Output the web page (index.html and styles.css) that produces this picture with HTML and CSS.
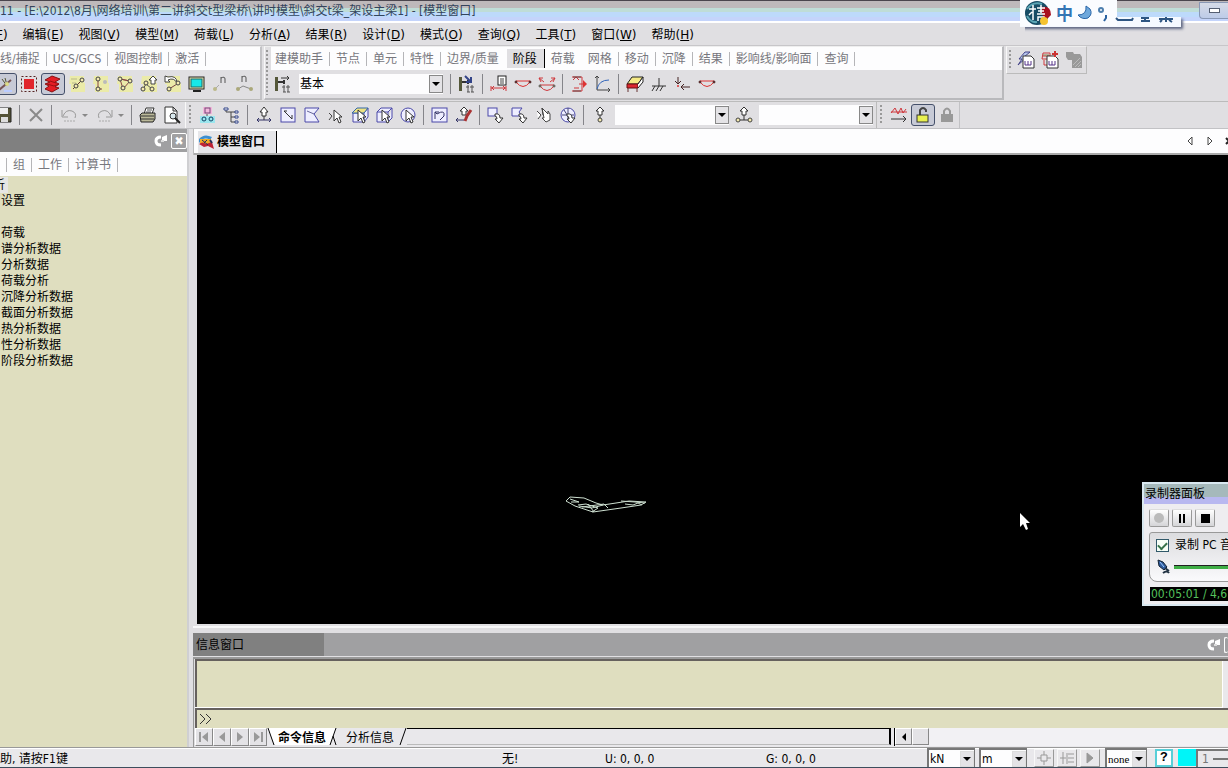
FILE: index.html
```html
<!DOCTYPE html>
<html lang="zh-CN">
<head>
<meta charset="utf-8">
<title>模型窗口</title>
<link rel="stylesheet" href="styles.css">
</head>
<body>
<header class="titlebar">
  <h1 class="title">11 - [E:\2012\8月\网络培训\第二讲斜交t型梁桥\讲时模型\斜交t梁_架设主梁1] - [模型窗口]</h1>
  <button class="minimize" aria-label="最小化"><span class="min-glyph"></span></button>
  <div class="ime">
    <div class="ime-top">
      <svg width="28" height="26" viewBox="0 0 28 26"><circle cx="13" cy="13" r="12" fill="#174c65"/><path d="M3 9Q9 1 18 4M3 16q4 7 10 6" stroke="#5ba5b5" stroke-width="2" fill="none"/><path d="M17 7q10-2 10 8l-7 7z" fill="#a80f20"/><path d="M5 9h7M9 5v15M8 12l-3 3M13 8h8M14 11h6M13 14h8M17 5v8M14 21v-4h6v4" stroke="#fff" stroke-width="1.500" fill="none"/><circle cx="20" cy="21" r="4" fill="#f5c331"/></svg>
      <span class="ime-cn">中</span>
      <svg width="16" height="18" viewBox="0 0 16 18"><path d="M9 2q1 9-8 9q4 5 10 3q5-4 2-9z" fill="#6ea8dc" stroke="#2a66a8"/></svg>
      <svg width="12" height="18" viewBox="0 0 12 18"><circle cx="4" cy="6" r="2" fill="none" stroke="#4d7fae" stroke-width="2"/><path d="M9 11v3l-2 3" stroke="#2a62a0" stroke-width="2" fill="none"/></svg>
    </div>
    <svg class="ime-rest" width="62" height="10" viewBox="0 0 62 10"><path d="M1 1l2 2h14l1-2M26 1h8M30 1v4M26 4h9M44 2h14M51 0v5M47 3l-2 2M54 3l3 2" stroke="#2d5582" stroke-width="2" fill="none"/></svg>
  </div>
</header>
<nav class="menubar">
  <button class="menu cut"><u>F</u>)</button><button class="menu">编辑(<u>E</u>)</button><button class="menu">视图(<u>V</u>)</button><button class="menu">模型(<u>M</u>)</button><button class="menu">荷载(<u>L</u>)</button><button class="menu">分析(<u>A</u>)</button><button class="menu">结果(<u>R</u>)</button><button class="menu">设计(<u>D</u>)</button><button class="menu">模式(<u>O</u>)</button><button class="menu">查询(<u>Q</u>)</button><button class="menu">工具(<u>T</u>)</button><button class="menu">窗口(<u>W</u>)</button><button class="menu">帮助(<u>H</u>)</button>
</nav>
<section class="dock dock-top">
  <div class="group view-group">
    <div class="tabs"><button class="tab first">线/捕捉</button><button class="tab">UCS/GCS</button><button class="tab">视图控制</button><button class="tab">激活</button></div>
    <div class="tools cropped">
      <button class="tool on" aria-label="捕捉"><svg viewBox="0 0 18 18"><path d="M3 15L15 5" stroke="#755" stroke-width="2"/><path d="M6 4l5 7M9 3l2 7" stroke="#553" fill="none"/><circle cx="11" cy="9" r="2" fill="#dd8"/><path d="M8 16h8" stroke="#bcf" stroke-width="2"/></svg></button>
      <button class="tool" aria-label="窗选"><svg viewBox="0 0 18 18"><rect x="1.500" y="1.500" width="15" height="15" fill="none" stroke="#522" stroke-dasharray="2 2"/><rect x="4" y="4" width="10" height="10" fill="#e1262c"/></svg></button>
      <button class="tool on" aria-label="钢束"><svg viewBox="0 0 18 18"><path d="M1 5l7-4 8 3-5 3 4 2-4 3 4 1-7 4-7-3 4-3-4-2 5-2z" fill="#e51e25" stroke="#811"/><path d="M3 9l7 2 5-2M6 6l6 2" stroke="#911" fill="none"/></svg></button>
      <button class="tool" aria-label="激活节点"><svg viewBox="0 0 18 18"><use href="#glow"/><path d="M5 14L14 5" stroke="#633"/><path d="M3 4h6M4 8h4" stroke="#b9b98a"/><circle cx="14" cy="5" r="2" class="nd"/><circle cx="8" cy="11" r="2" class="nd"/></svg></button>
      <button class="tool" aria-label="激活单元"><svg viewBox="0 0 18 18"><use href="#glow"/><path d="M6 4v10h4" stroke="#844" fill="none"/><circle cx="6" cy="4" r="2" class="nd"/><circle cx="6" cy="14" r="2" class="nd"/><circle cx="13" cy="7" r="2" fill="#bbb"/></svg></button>
      <button class="tool" aria-label="激活平面"><svg viewBox="0 0 18 18"><use href="#glow"/><path d="M4 4l3 10 7-8zM4 4l10 2" stroke="#844" fill="none"/><circle cx="4" cy="4" r="2" class="nd"/><circle cx="7" cy="13" r="2" class="nd"/><circle cx="14" cy="6" r="2" class="nd"/></svg></button>
      <button class="tool" aria-label="选择"><svg viewBox="0 0 18 18"><use href="#glow"/><path d="M9 5l4-4 4 4h-2v4h-4V5z" fill="#fff" stroke="#444"/><path d="M3 14L6 9l6 5" stroke="#555" fill="none"/><circle cx="3" cy="14" r="2" class="nd"/><circle cx="12" cy="14" r="2" class="nd"/><circle cx="6" cy="8" r="2" class="nd"/></svg></button>
      <button class="tool" aria-label="恢复"><svg viewBox="0 0 18 18"><use href="#glow"/><path d="M1 1v6h5L4 5q6-3 9 3 0-8-9-6z" fill="#fff" stroke="#444"/><path d="M5 14l8-5" stroke="#744"/><circle cx="5" cy="14" r="2" class="nd"/><circle cx="14" cy="8" r="2" class="nd"/></svg></button>
      <button class="tool" aria-label="显示"><svg viewBox="0 0 18 18"><rect x="1" y="2" width="15" height="12" fill="#e9e9b0" stroke="#222"/><rect x="3" y="4" width="11" height="8" fill="#18e8e8" stroke="#266"/><path d="M5 16h8" stroke="#222" stroke-width="2"/></svg></button>
      <button class="tool" aria-label="节点号"><svg viewBox="0 0 18 18"><path d="M9 8V2M9 3q4-2 4 1v4" stroke="#555" fill="none"/><circle cx="3" cy="14" r="2" fill="#bbb98a"/><path d="M4 13l3-3" stroke="#aaa"/></svg></button>
      <button class="tool" aria-label="单元号"><svg viewBox="0 0 18 18"><path d="M6 7V1M6 2q4-2 4 1v4" stroke="#555" fill="none"/><path d="M2 14L7 11l8 3" stroke="#888" fill="none"/><circle cx="2" cy="14" r="2" fill="#aaa87a"/><circle cx="15" cy="14" r="2" fill="#aaa87a"/></svg></button>
    </div>
  </div>
  <div class="group model-group">
    <span class="grip"></span>
    <div class="group-body">
      <div class="tabs"><button class="tab">建模助手</button><button class="tab">节点</button><button class="tab">单元</button><button class="tab">特性</button><button class="tab plain">边界/质量</button><button class="tab active">阶段</button><button class="tab plain">荷载</button><button class="tab">网格</button><button class="tab">移动</button><button class="tab">沉降</button><button class="tab">结果</button><button class="tab">影响线/影响面</button><button class="tab">查询</button></div>
      <div class="tools">
        <button class="tool" aria-label="定义阶段"><svg viewBox="0 0 18 18"><use href="#stage"/><path d="M7 3h8m-2-2l2 2-2 2" stroke="#333" fill="none"/></svg></button>
        <span class="combo stage-combo"><select aria-label="施工阶段"><option>基本</option></select><i class="arrow"></i></span>
        <i class="sep"></i>
        <button class="tool" aria-label="阶段"><svg viewBox="0 0 18 18"><use href="#stage"/><path d="M7 1l6 6M13 2v5H8" stroke="#348" stroke-width="2" fill="none"/></svg></button>
        <i class="sep"></i>
        <button class="tool" aria-label="钢束特性"><svg viewBox="0 0 18 18"><rect x="8" y="1" width="8" height="9" fill="#fff" stroke="#222"/><path d="M10 4h4M10 6h4M10 8h4" stroke="#444"/><path d="M1 13h15M1 11v5M16 11v5M4 11l-2 2 2 2M13 11l2 2-2 2" class="red"/></svg></button>
        <button class="tool" aria-label="钢束形状"><svg viewBox="0 0 18 18"><use href="#tendon"/></svg></button>
        <button class="tool" aria-label="钢束预应力"><svg viewBox="0 0 18 18"><path d="M3 7l-2-4h4M1 3l5 4M15 7l2-4h-4M17 3l-5 4M2 10h14M2 11q7 9 14 0" class="red"/><circle cx="2" cy="11" r="1" class="nd"/><circle cx="16" cy="11" r="1" class="nd"/></svg></button>
        <i class="sep"></i>
        <button class="tool" aria-label="荷载"><svg viewBox="0 0 18 18"><path d="M2 2h10v14H2M3 5l3-3 3 3M4 13h5M9 9h5" class="red"/><path d="M13 5l4 4-4 4z" fill="#d33"/><path d="M3 2h8M3 16h8" stroke="#644"/></svg></button>
        <button class="tool" aria-label="曲线"><svg viewBox="0 0 18 18"><path d="M3 1v14h13M1 3l2-2 2 2M14 13l2 2-2 2" stroke="#444" fill="none"/><path d="M3 14Q5 5 15 5" stroke="#36b" fill="none"/></svg></button>
        <i class="sep"></i>
        <button class="tool" aria-label="截面"><svg viewBox="0 0 18 18"><path d="M1 9L6 2h11l-5 7z" fill="#f5ea86" stroke="#222"/><path d="M1 9h11v4H1z" fill="#dc2730" stroke="#611"/><path d="M12 9l5-7v5l-5 6" fill="#fff" stroke="#222"/><path d="M2 13v4M11 13v4" stroke="#633"/></svg></button>
        <button class="tool" aria-label="边界"><svg viewBox="0 0 18 18"><path d="M9 3v8M2 11h14M5 11l-3 5M9 11l-3 5M13 11l-3 5" stroke="#333" fill="none"/></svg></button>
        <button class="tool" aria-label="作用"><svg viewBox="0 0 18 18"><path d="M4 2v7M1 6l3 3 3-3" stroke="#422" fill="none"/><circle cx="4" cy="11" r="1" fill="#d33"/><path d="M7 12h9M10 9l-3 3 3 3" stroke="#422" fill="none"/></svg></button>
        <button class="tool" aria-label="钢束"><svg viewBox="0 0 18 18"><use href="#tendon"/></svg></button>
      </div>
    </div>
  </div>
  <div class="group word-group">
    <span class="grip"></span>
    <button class="tool" aria-label="生成报告"><svg viewBox="0 0 18 18"><path d="M8 1L2 8h3l-4 6 9-8H7l6-5z" fill="#b8c8f0" stroke="#448"/><use href="#word"/></svg></button>
    <button class="tool" aria-label="添加报告"><svg viewBox="0 0 18 18"><path d="M2 2h7v6H1zM2 5h7M3 9v5h3" class="red"/><path d="M2 4h6" stroke="#885"/><use href="#word"/><path d="M14 0v6M11 3h6" stroke="#c33" stroke-width="2"/></svg></button>
    <button class="tool" aria-label="报告"><svg viewBox="0 0 18 18"><path d="M1 1h7l1 2h6l2 3v11H7V9H3L1 6z" fill="#999"/><path d="M8 14l7-7M10 16l6-6M13 16l3-3" stroke="#bbb"/></svg></button>
  </div>
</section>
<section class="dock dock-low">
  <div class="tools save-tools">
    <button class="tool" aria-label="保存"><svg viewBox="0 0 18 18"><path d="M2 2h14v14H2z" fill="#555337" stroke="#222"/><path d="M5 2h8v6H5z" fill="#eee"/><path d="M6 11h7v5H6z" fill="#ddd"/></svg></button><i class="sep"></i>
    <button class="tool" aria-label="删除"><svg viewBox="0 0 18 18"><path d="M3 3l12 12M15 3L3 15" stroke="#8a8a8a" stroke-width="2"/></svg></button><i class="sep"></i>
    <button class="tool undo" aria-label="撤销"><svg viewBox="0 0 18 18"><use href="#undo"/></svg><i class="drop"></i></button>
    <button class="tool undo" aria-label="重做"><svg viewBox="0 0 18 18"><use href="#undo" transform="matrix(-1 0 0 1 18 0)"/></svg><i class="drop"></i></button><i class="sep"></i>
    <button class="tool" aria-label="打印"><svg viewBox="0 0 18 18"><path d="M5 8l2-6h8l-2 6" fill="#fff" stroke="#333"/><path d="M8 4h5M7 6h5" stroke="#555"/><path d="M1 9l2-2h13v6l-2 3H2z" fill="#bbb99a" stroke="#222"/><path d="M2 10h13M2 13h13" stroke="#333"/></svg></button>
    <button class="tool" aria-label="打印预览"><svg viewBox="0 0 18 18"><path d="M2 1h8l4 4v12H2zM10 1v4h4" fill="#fff" stroke="#333"/><circle cx="10" cy="10" r="3" fill="#d9e8ee" stroke="#333"/><path d="M12 12l5 5" stroke="#222" stroke-width="2"/></svg></button>
  </div>
  <div class="tools select-tools">
    <span class="grip"></span>
    <button class="tool" aria-label="组"><svg viewBox="0 0 18 18"><path d="M4 1h9v7H4z" fill="#f3b8dc"/><path d="M1 10h15v7H1z" fill="#9be6ee"/><rect x="6" y="2" width="5" height="5" fill="none" stroke="#747"/><circle cx="5" cy="13" r="2" fill="none" stroke="#146"/><circle cx="12" cy="13" r="2" fill="none" stroke="#146"/><path d="M8 8v2" stroke="#555"/></svg></button>
    <button class="tool" aria-label="树"><svg viewBox="0 0 18 18"><path d="M3 3v3h5v10h4M8 6h4M8 11h4" stroke="#444" fill="none"/><path d="M1 2h4v2H1zM12 5h3v2h-3zM12 10h3v2h-3zM12 15h3v2h-3z" fill="#fff" stroke="#348"/></svg></button><i class="sep"></i>
    <button class="tool" aria-label="单选"><svg viewBox="0 0 18 18"><path d="M9 1l4 5h-2v4H7V6H5zM9 10v4" fill="#fff" stroke="#333"/><path d="M2 14h14M4 12l-2 2 2 2M14 12l2 2-2 2" stroke="#336" fill="none"/></svg></button>
    <button class="tool" aria-label="窗口选择"><svg viewBox="0 0 18 18"><rect x="2" y="2" width="14" height="14" class="blue"/><path d="M5 5l8 8M5 5h3M13 13v-4" stroke="#333" fill="none"/></svg></button>
    <button class="tool" aria-label="多边形选择"><svg viewBox="0 0 18 18"><path d="M2 2h14l-5 6 5 8H2z" class="blue"/><path d="M4 5l7 3" stroke="#669"/></svg></button>
    <button class="tool" aria-label="交叉选择"><svg viewBox="0 0 18 18"><path d="M2 7l3 3-3 4" stroke="#444" fill="none"/><use href="#pointer"/></svg></button>
    <button class="tool" aria-label="平面选择"><svg viewBox="0 0 18 18"><path d="M2 7h11v9H2zM13 7l4-5v9l-4 5" class="blue"/><path d="M1 7l5-5h11l-4 5z" fill="#eee383" stroke="#36a"/><use href="#pointer"/></svg></button>
    <button class="tool" aria-label="体选择"><svg viewBox="0 0 18 18"><path d="M2 6h11v10H2zM2 6l4-4h11l-4 4M17 2v10l-4 4" class="blue"/><use href="#pointer"/></svg></button>
    <button class="tool" aria-label="全选"><svg viewBox="0 0 18 18"><circle cx="9" cy="9" r="7" class="blue"/><use href="#pointer"/></svg></button><i class="sep"></i>
    <button class="tool" aria-label="前次选择"><svg viewBox="0 0 18 18"><rect x="1" y="2" width="15" height="14" class="blue"/><path d="M4 13V6l2 2q8-5 7 2l-4 4M4 6h4" stroke="#336" fill="none"/></svg></button>
    <button class="tool" aria-label="最新选择"><svg viewBox="0 0 18 18"><path d="M5 5l4-4 4 4h-2v4H7V5z" fill="#fff" stroke="#333"/><path d="M1 14h8M3 12l-2 2 2 2" stroke="#336" fill="none"/><path d="M10 15l2-5 4-6" stroke="#a33" stroke-width="3"/></svg></button><i class="sep"></i>
    <button class="tool" aria-label="窗口解除"><svg viewBox="0 0 18 18"><rect x="1" y="2" width="9" height="8" class="blue"/><use href="#down"/></svg></button>
    <button class="tool" aria-label="多边形解除"><svg viewBox="0 0 18 18"><path d="M1 2h10L8 6l3 4H1z" class="blue"/><use href="#down"/></svg></button>
    <button class="tool" aria-label="交叉解除"><svg viewBox="0 0 18 18"><path d="M2 5l4 4-3 4M7 2l6 6V5l2 3v6l-4 2-4-4h2zM7 2l1 7" fill="#fff" stroke="#444"/></svg></button>
    <button class="tool" aria-label="全部解除"><svg viewBox="0 0 18 18"><circle cx="9" cy="9" r="7" class="blue"/><path d="M3 9h12M5 4l7 11M9 2v12" stroke="#447" fill="none"/><use href="#down"/></svg></button><i class="sep"></i>
    <button class="tool" aria-label="选择节点"><svg viewBox="0 0 18 18"><path d="M9 1l4 4h-2v4H7V5H5z" fill="#fff" stroke="#333"/><path d="M9 9v4" stroke="#333"/><circle cx="9" cy="14" r="2" class="nd"/></svg></button>
    <span class="combo pick"><select aria-label="节点"><option></option></select><i class="arrow"></i></span>
    <button class="tool" aria-label="选择单元"><svg viewBox="0 0 18 18"><path d="M9 1l4 4h-2v4H7V5H5z" fill="#fff" stroke="#333"/><path d="M3 14h12M9 9v5" stroke="#333"/><circle cx="3" cy="14" r="2" class="nd"/><circle cx="15" cy="14" r="2" class="nd"/></svg></button>
    <span class="combo pick"><select aria-label="单元"><option></option></select><i class="arrow"></i></span>
  </div>
  <div class="tools lock-tools">
    <span class="grip"></span>
    <button class="tool" aria-label="分析状态"><svg viewBox="0 0 18 18"><path d="M1 7l4-5 3 6 3-6 2 5 3-4M1 6h16" class="red"/><path d="M1 13h15M13 10l3 3-3 3" stroke="#333" fill="none"/></svg></button>
    <button class="tool on" aria-label="解锁"><svg viewBox="0 0 18 18"><path d="M6 9V4q3-4 6 0v2" stroke="#444" stroke-width="2" fill="none"/><rect x="3" y="9" width="11" height="7" fill="#e8f050" stroke="#333"/></svg></button>
    <button class="tool" aria-label="锁定"><svg viewBox="0 0 18 18"><path d="M6 8V5q3-5 6 0v4" stroke="#999" stroke-width="2" fill="none"/><rect x="3" y="8" width="12" height="8" fill="#999"/></svg></button>
  </div>
</section>
<main class="workspace">
  <aside class="sidebar">
    <div class="pane-head side-head"><span class="grow"></span><svg class="pin" viewBox="0 0 14 12"><use href="#pin"/></svg><button class="close" aria-label="关闭">✖</button></div>
    <div class="tabs side-tabs"><button class="tab">组</button><button class="tab">工作</button><button class="tab">计算书</button></div>
    <ul class="tree"><li><span class="selected">析</span></li><li>设置</li><li></li><li>荷载</li><li>谱分析数据</li><li>分析数据</li><li>荷载分析</li><li>沉降分析数据</li><li>截面分析数据</li><li>热分析数据</li><li>性分析数据</li><li>阶段分析数据</li></ul>
  </aside>
  <div class="content">
    <div class="doc-tabs">
      <button class="doc-tab"><svg width="17" height="16" viewBox="0 0 17 16"><path d="M1 5q5-6 13-2l-2 3Q6 2 1 9z" fill="#3c8fd0"/><path d="M2 5h11v5H2z" fill="#f0ad24"/><path d="M1 10q4-3 7 0l6-2 2 7-6-3-4 1z" fill="#be2335"/><path d="M4 6l6 5M9 6l-3 3" stroke="#24315d"/><path d="M12 6l2 3" stroke="#24315d" stroke-width="2"/></svg>模型窗口</button>
      <span class="grow"></span>
      <svg width="42" height="12" viewBox="0 0 42 12"><path d="M6 1v8L2 5zM22 1v8l4-4z" fill="#fff" stroke="#444"/><path d="M40 2l6 6M46 2l-6 6" stroke="#222" stroke-width="2"/></svg>
    </div>
    <div class="viewport">
      <svg class="model" width="84" height="20" viewBox="0 0 84 20"><path d="M1 5L5 1l14 1 12 5 7 2 26-4 17 1-5 3-20 3-28 4-18-6zM5 3l9 3-8 0M13 9l8-1 12 4-6 4M17 11l22-3 4 4M23 8l6 8M38 9l-11 3-13-2M56 5l14 1 10 1M60 8l8 1 5-2 4 2" fill="none" stroke="#cddfd0"/></svg>
      <svg class="cursor" width="12" height="19" viewBox="0 0 12 19"><path d="M1 1v14l3-3 3 6 2-1-2-6h4z" fill="#fff"/></svg>
      <section class="recorder">
        <h2 class="rec-title">录制器面板</h2>
        <div class="rec-buttons"><button class="rec-btn" aria-label="录制"><i class="dot"></i></button><button class="rec-btn" aria-label="暂停"><i class="pause"></i></button><button class="rec-btn" aria-label="停止"><i class="stop"></i></button></div>
        <div class="rec-box">
          <label class="rec-check"><input type="checkbox" checked>录制 PC 音</label>
          <div class="rec-level"><svg width="16" height="16" viewBox="0 0 16 16"><path d="M2 1l5 2 4 5-3 3-5-4z" fill="#2f5a9c" stroke="#123"/><path d="M9 9l4 3M7 14q4-3 6 0" stroke="#234" stroke-width="2" fill="none"/><path d="M4 3l4 5" stroke="#9cf"/></svg><span class="meter"></span></div>
        </div>
        <div class="rec-time">00:05:01 / 4,6</div>
      </section>
    </div>
    <section class="messages">
      <div class="pane-head msg-head"><h2 class="msg-title">信息窗口</h2><span class="grow"></span><svg class="pin" viewBox="0 0 14 12"><use href="#pin"/></svg><button class="close edge" aria-label="关闭"></button></div>
      <div class="msg-frame">
        <div class="msg-body"><span class="grow"></span><span class="vscroll"></span></div>
        <label class="prompt"><svg width="14" height="10" viewBox="0 0 14 10"><path d="M1 0l5 5-5 5M7 0l5 5-5 5" stroke="#333" fill="none"/></svg><input type="text" aria-label="命令"></label>
        <div class="msg-tabs">
          <button class="nav" aria-label="首页"><svg viewBox="0 0 12 12"><path d="M2 1v10" class="navline"/><path d="M10 1v10L4 6z"/></svg></button><button class="nav" aria-label="上一页"><svg viewBox="0 0 12 12"><path d="M9 1v10L3 6z"/></svg></button><button class="nav" aria-label="下一页"><svg viewBox="0 0 12 12"><path d="M3 1v10l6-5z"/></svg></button><button class="nav" aria-label="末页"><svg viewBox="0 0 12 12"><path d="M2 1v10l6-5z"/><path d="M10 1v10" class="navline"/></svg></button>
          <svg class="slant" viewBox="0 0 8 17"><path d="M0 0h8v17z" fill="#fff"/><path d="M1 0l6 17" stroke="#000"/></svg><button class="sheet current">命令信息</button><svg class="slant" viewBox="0 0 8 17"><path d="M0 0h7L1 17H0z" fill="#fff"/><path d="M7 0L1 17M4 8l3 9" stroke="#000" fill="none"/></svg><button class="sheet wide">分析信息</button><svg class="slant" viewBox="0 0 8 17"><path d="M7 0L1 17" stroke="#000"/></svg>
          <span class="sheet-rest"></span>
          <span class="hscroll"><button class="scroll-btn" aria-label="向左"><i class="left"></i></button><button class="scroll-btn" aria-label="滚动块"></button></span>
        </div>
      </div>
    </section>
  </div>
</main>
<footer class="status">
  <span class="label help">助, 请按F1键</span><span class="label state">无!</span><span class="label coord">U: 0, 0, 0</span><span class="label coord global">G: 0, 0, 0</span><span class="grow"></span>
  <span class="combo unit"><select aria-label="力"><option>kN</option></select><i class="arrow"></i></span>
  <span class="combo unit"><select aria-label="长度"><option>m</option></select><i class="arrow"></i></span>
  <span class="status-tools"><button class="small" aria-label="中心"><svg viewBox="0 0 16 16"><path d="M8 1v4M8 11v4M1 8h4M11 8h4M5 5h6v6H5z"/></svg></button><button class="small" aria-label="对齐"><svg viewBox="0 0 16 16"><path d="M4 2v12M1 8h6M8 3v11M15 4H9M15 8H9M15 12H9"/></svg></button><button class="small" aria-label="运行"><svg viewBox="0 0 16 16"><path d="M5 3v10l6-5z" fill="#999"/></svg></button></span>
  <span class="combo unit filter"><select aria-label="过滤"><option>none</option></select><i class="arrow"></i></span>
  <button class="question">?</button><span class="swatch"></span><span class="spin"><span class="num">1</span><span class="ticks"></span></span>
</footer>
<svg class="defs" width="0" height="0" aria-hidden="true"><defs>
  <g id="glow"><path d="M2 1h14v7h1v9H3V9H1z" fill="#eeee9b" opacity=".8"/></g>
  <g id="stage"><path d="M1 2h3v14H1z" fill="#55583a"/><path d="M4 7h6M10 5v4" stroke="#333" stroke-width="2"/><path d="M10 10v7M14 10v7M8 12h3M12 12h4M9 17h3M13 17h3" stroke="#555"/></g>
  <g id="tendon"><path d="M2 6h14M2 7q7 9 14 0" fill="none" stroke="#d33"/><circle cx="2" cy="7" r="1" fill="#933" stroke="#422"/><circle cx="16" cy="7" r="1" fill="#933" stroke="#422"/></g>
  <g id="word"><path d="M6 5h8l3 3v9H6z" fill="#fff" stroke="#333"/><path d="M8 10v4h6v-4M11 10v4" stroke="#538" fill="none"/></g>
  <g id="undo"><path d="M2 4v7h6" stroke="#999" fill="none"/><path d="M3 10q3-7 9-5 5 2 3 7" stroke="#999" fill="none"/><path d="M4 15h12" stroke="#aaa" stroke-dasharray="2 1"/></g>
  <g id="pointer"><path d="M7 4v11l3-3 2 5 2-1-2-5h3z" fill="#fff" stroke="#333"/></g>
  <g id="down"><path d="M8 8q5-1 5 4h3l-4 5-4-4h2q0-3-2-3z" fill="#fff" stroke="#333"/></g>
  <g id="pin"><path d="M7 2Q2 2 2 6q0 4 5 4" stroke="#fff" stroke-width="3" fill="none"/><path d="M8 2l5-2v6H8z" fill="#fff"/><path d="M7 6h3" stroke="#ddd" stroke-width="2"/></g>
</defs></svg>
</body>
</html>
```

FILE: styles.css
```css
* { box-sizing: border-box; }
html, body { height: 100%; }
body { margin: 0; display: flex; flex-direction: column; overflow: hidden; background: #e0dfe2; color: #000; font: 12px/16px "DejaVu Sans Condensed", "Noto Sans CJK SC", sans-serif; }
button, select, input { font: inherit; color: inherit; margin: 0; padding: 0; border: 0; border-radius: 0; background: none; }
button { white-space: nowrap; }
h1, h2 { margin: 0; font: inherit; }
i { display: block; }
svg { display: block; flex: none; }
.defs { position: absolute; }
.grow { flex: 1; }

.titlebar { position: relative; flex: none; height: 23px; display: flex; justify-content: space-between; background: linear-gradient(#4a454d 0 1px, #beb9bb 1px 8px, #bfddd7 8px 12px, #bddafb 12px 17px, #c4d4fb 17px 21px, #fff 21px); }
.title { padding-top: 3px; color: #33445b; white-space: nowrap; }
.minimize { width: 29px; height: 17px; margin-top: 2px; display: grid; place-items: center; border: 1px solid #8998b5; border-right: 0; border-radius: 0 0 0 4px; background: linear-gradient(#d6dbe7, #bdcbe8); }
.min-glyph { width: 11px; height: 5px; border: 1px solid #555f72; background: #fff; }
.ime { position: absolute; z-index: 1; right: 47px; top: 0; width: 161px; height: 27px; background: linear-gradient(transparent 0 17px, #f5f9ff 17px); }
.ime::after { content: ""; position: absolute; right: 0; top: 17px; width: 100%; height: 10px; box-shadow: 2px 2px 3px #5c6480; clip-path: inset(0 -6px -6px 5px); }
.ime-top { width: 97px; height: 26px; display: flex; align-items: center; gap: 4px; padding-left: 4px; background: #fafcff; }
.ime-cn { font: bold 17px/24px "Noto Sans CJK SC", sans-serif; color: #3475b4; }
.ime-rest { position: absolute; right: 4px; top: 17px; }

.menubar { flex: none; height: 23px; padding-top: 2px; display: flex; align-items: center; gap: 15px; overflow: hidden; border-bottom: 1px solid #c7c6c9; font-family: "DejaVu Sans", "Noto Sans CJK SC", sans-serif; }
.menu.cut { margin-left: -4px; }

.dock { flex: none; display: flex; align-items: flex-start; gap: 2px; }
.dock-top { height: 55px; }
.group { display: flex; border: 1px solid #bbb; border-top-color: #eee; border-left-color: #f8f8f8; }
.view-group { flex-direction: column; width: 262px; height: 54px; border-left: 0; border-right: 2px solid #c2c2c5; overflow: hidden; }
.model-group { width: 740px; height: 54px; border-right: 2px solid #b9b9bc; border-bottom: 2px solid #b9b9bc; }
.group-body { flex: 1; display: flex; flex-direction: column; }
.word-group { height: 28px; align-items: center; }
.grip { flex: none; width: 10px; align-self: stretch; margin: 3px 0; background: repeating-linear-gradient(#999 0 2px, transparent 2px 4px) 3px 0 / 2px 100% no-repeat; }
.model-group .grip { width: 6px; background-position-x: 1px; }
.word-group .grip { width: 7px; background-position-x: 2px; }
.tabs { height: 23px; flex: none; display: flex; align-items: center; background: #fdfdfe; color: #77777d; overflow: hidden; }
.tab { height: 14px; line-height: 14px; padding: 0 6px; border-right: 1px solid #b5b5b8; }
.tab.first { padding-left: 0; }
.model-group .tab:first-child { padding-left: 4px; }
.tab.plain { border-color: transparent; }
.tab.active { height: 19px; margin-left: 1px; padding: 0 7px 0 6px; background: #e0dfe2; color: #000; border-color: #000; }
.tools { display: flex; align-items: center; height: 28px; }
.cropped { margin-left: -7px; }
.save-tools { margin-left: -8px; }
.tool { flex: none; width: 24px; height: 22px; display: flex; align-items: center; justify-content: center; }
.tool svg { width: 18px; height: 18px; }
.tool.on { border: 1px solid #45506a; border-radius: 3px; background: #c7cad6; }
.sep { flex: none; width: 1px; height: 20px; margin: 0 4px 0 3px; background: #85858a; }
.nd { fill: #f4eab0; stroke: #444; }
.red { fill: none; stroke: #cf383d; }
.blue { fill: #eef; stroke: #4a49a8; }
.combo { flex: none; display: flex; align-items: center; background: #fdfdfe; height: 20px; }
.combo select { appearance: none; flex: 1; min-width: 0; height: 100%; padding-left: 1px; }
.arrow { flex: none; width: 14px; height: 18px; border: 1px solid #888; background: #e4e3e6; display: grid; place-items: center; }
.arrow::before { content: ""; border: 4px solid transparent; border-top-color: #000; border-bottom: 0; }
.stage-combo { width: 144px; margin: 0 4px; }
.pick { width: 114px; margin: 0 3px; }

.dock-low { height: 28px; gap: 0; border-top: 1px solid #bbb; border-bottom: 1px solid #c2c2c5; }
.dock-low .tools { height: 26px; }
.select-tools { margin-left: 1px; border-left: 1px solid #f8f8f8; border-right: 1px solid #bbb; }
.lock-tools { border-right: 1px solid #c2c2c5; }
.undo { width: 36px; gap: 4px; }
.drop { border: 3px solid transparent; border-top-color: #888; border-bottom: 0; }

.workspace { flex: 1; min-height: 0; display: flex; gap: 4px; }
.sidebar { flex: none; width: 189px; display: flex; flex-direction: column; border-right: 2px solid #cfcfd2; background: #dfdebf; }
.pane-head { flex: none; height: 23px; display: flex; align-items: center; gap: 3px; background: linear-gradient(90deg, #808080 0 var(--dark), #a0a0a2 var(--dark)); }
.side-head { --dark: 60px; }
.pin { width: 14px; height: 12px; }
.close { width: 16px; height: 16px; border: 1px solid #fff; border-radius: 2px; color: #fff; line-height: 14px; }
.close.edge { width: 4px; border-right: 0; }
.side-tabs { height: 24px; padding: 1px 0 0 6px; }
.side-tabs .tab:first-child { border-left: 1px solid #b5b5b8; }
.tree { list-style: none; margin: 0; padding: 1px 0 0; flex: 1; overflow: hidden; }
.tree li { height: 16px; line-height: 16px; padding-left: 1px; white-space: nowrap; }
.selected { display: inline-block; margin-left: -8px; padding-right: 3px; background: #e6e6e4; }
.content { flex: 1; min-width: 0; display: flex; flex-direction: column; }
.doc-tabs { flex: none; height: 26px; display: flex; align-items: center; padding-left: 4px; background: linear-gradient(#fdfdfe 0 24px, #aaa 24px); border-left: 1px solid #bbb; }
.doc-tab { height: 22px; width: 79px; display: flex; align-items: center; gap: 2px; background: #e6e6e9; border-right: 1px solid #000; font-weight: bold; }
.viewport { position: relative; flex: 1; min-height: 0; margin-left: 4px; background: #000; overflow: hidden; }
.model { position: absolute; left: 368px; top: 341px; }
.cursor { position: absolute; right: 197px; top: 357px; }

.recorder { position: absolute; right: 0; top: 327px; width: 86px; height: 124px; overflow: hidden; border: 2px solid #d9e8f0; border-right: 0; background: #eeedf0; white-space: nowrap; }
.rec-title { height: 20px; padding: 2px 0 0 1px; background: linear-gradient(#a5b9bb 0 13px, #b8b8f0 13px); }
.rec-buttons { display: flex; gap: 3px; padding: 5px 5px; }
.rec-btn { flex: none; width: 20px; height: 18px; display: grid; place-items: center; border: 1px solid #999; border-top-color: #ddd; border-radius: 2px; background: linear-gradient(#fff, #d5d5d8); }
.dot { width: 10px; height: 10px; border-radius: 50%; background: #bbb; }
.pause { width: 6px; height: 9px; border: solid #000; border-width: 0 2px; }
.stop { width: 9px; height: 9px; background: #000; }
.rec-box { width: 120px; height: 50px; margin-left: 5px; border: 1px solid #999; border-radius: 3px 3px 8px 8px; background: linear-gradient(#dcdcdf, #fafafc); }
.rec-check { display: flex; align-items: center; gap: 6px; padding: 4px 0 0 6px; }
.rec-check input { appearance: none; width: 13px; height: 13px; border: 1px solid #31596a; background: #f7fff7; display: grid; place-items: center; }
.rec-check input:checked::before { content: ""; width: 7px; height: 4px; border: solid #36734a; border-width: 0 0 2px 2px; transform: rotate(-45deg); }
.rec-level { display: flex; align-items: center; gap: 2px; padding: 6px 0 0 6px; }
.meter { width: 90px; height: 4px; border-top: 1px solid #222; background: #3fae46; }
.rec-time { margin: 5px 0 0 6px; height: 14px; line-height: 14px; padding-left: 1px; background: #000; color: #55c25d; }

.messages { flex: none; margin-top: 2px; padding-top: 5px; border-top: 2px solid #f8f8f9; }
.msg-head { --dark: 131px; padding-left: 3px; }
.msg-frame { margin-top: 1px; padding-left: 1px; border: solid #999; border-width: 2px 0 0 1px; }
.msg-body { height: 49px; display: flex; border: solid #66615e; border-width: 2px 0 0 2px; background: #dfdebf; }
.vscroll { width: 6px; border-left: 1px solid #fff; background: #e9e8eb; }
.prompt { height: 20px; display: flex; align-items: center; padding-left: 2px; border: solid #66615e; border-width: 2px 0 0 2px; background: #dfdebf; box-shadow: 0 -1px #fff; }
.prompt input { flex: 1; min-width: 0; height: 16px; }
.msg-tabs { height: 19px; display: flex; align-items: flex-start; background: #e9e8eb; }
.nav { flex: none; width: 18px; height: 18px; display: grid; place-items: center; border: 1px solid #888; border-top-color: #fff; border-left-color: #fff; background: #e4e3e6; }
.nav svg { width: 12px; height: 12px; fill: #999; }
.navline { stroke: #999; stroke-width: 2; }
.slant { width: 8px; height: 17px; }
.sheet { flex: none; height: 17px; line-height: 16px; padding: 2px 1px 0; width: 54px; }
.sheet.current { font-weight: bold; background: #fff; }
.sheet.wide { width: 62px; padding-left: 5px; }
.sheet-rest { flex: 1 1 0; height: 17px; border: solid #000; border-width: 1px 2px 1px 0; border-bottom-color: #bbb; }
.hscroll { flex: 0 1 334px; height: 18px; margin-left: 3px; display: flex; background: #f2f1f4; border-left: 1px solid #000; }
.scroll-btn { width: 17px; height: 17px; display: grid; place-items: center; border: 1px solid #888; border-top-color: #fff; border-left-color: #fff; background: #e4e3e6; }
.left { border: 4px solid transparent; border-right-color: #000; border-left: 0; }

.status { flex: none; height: 21px; display: flex; align-items: center; border-top: 1px solid #999; border-bottom: 1px solid #3d4d5c; box-shadow: inset 0 1px #fff; background: #e9e8eb; white-space: nowrap; overflow: hidden; }
.status > * { flex: none; }
.status > .grow { flex: 1; }
.label { padding-top: 3px; }
.help { width: 502px; }
.state { width: 103px; }
.coord { width: 161px; }
.coord.global { width: 120px; }
.unit { width: 48px; height: 19px; margin-right: 4px; border: solid #777; border-width: 2px 1px 0 2px; }
.unit .arrow { height: 16px; border-color: #ddd; background: #e4e3e6; }
.status-tools { display: flex; gap: 3px; margin: 0 5px 0 3px; }
.small { width: 20px; height: 18px; display: grid; place-items: center; border: 1px solid #999; border-top-color: #f8f8f8; border-left-color: #f8f8f8; }
.small svg { width: 16px; height: 16px; fill: none; stroke: #999; }
.filter { width: 42px; margin-right: 3px; font: 11px/16px "Liberation Serif", serif; }
.question { width: 18px; height: 18px; margin: 0 5px; border: 2px solid #58cfd8; background: #fff; font: bold 13px/14px "Liberation Mono", monospace; }
.swatch { width: 18px; height: 17px; background: #00f5f8; }
.spin { width: 32px; height: 18px; display: flex; align-items: center; border: solid #777; border-width: 2px 0 0 2px; color: #777; }
.num { width: 15px; padding-left: 4px; }
.ticks { flex: 1; height: 14px; background: linear-gradient(transparent 0 6px, #777 6px 8px, transparent 8px); }
```
